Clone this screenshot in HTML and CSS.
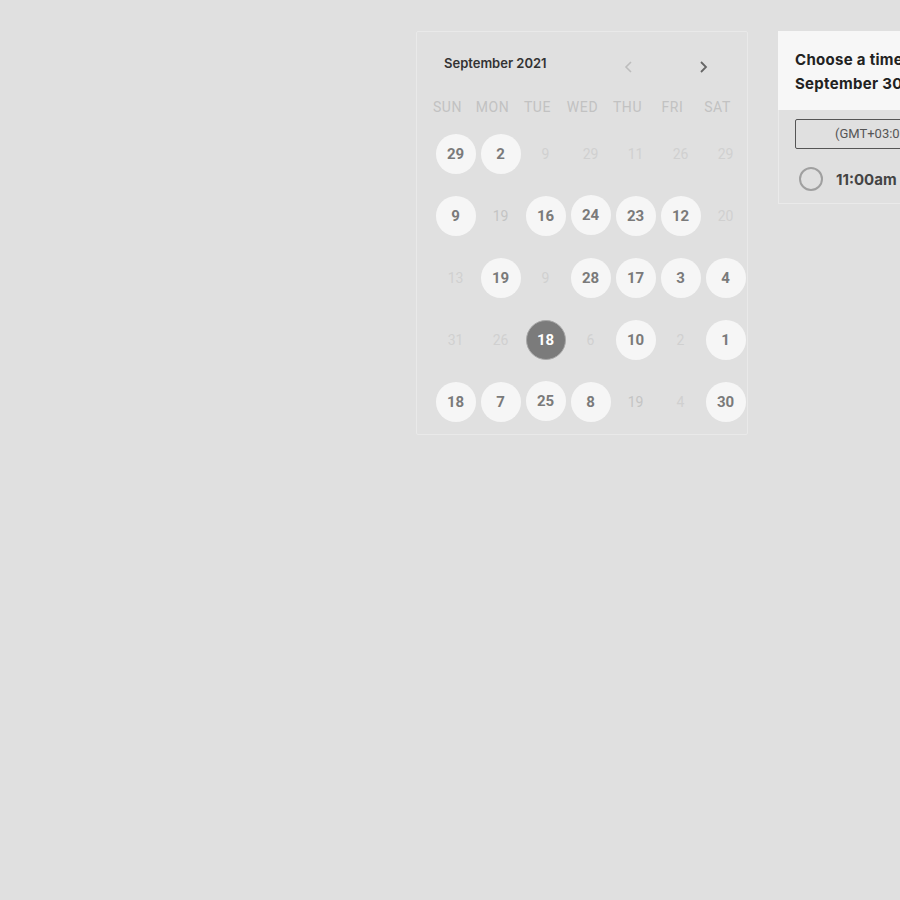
FILE: index.html
```html
<!DOCTYPE html>
<html>
<head>
<meta charset="utf-8">
<link rel="stylesheet" href="styles.css">
</head>
<body>
<div class="page">
  <div class="calendar">
    <div class="cal-head">
      <div class="cal-title">September 2021</div>
      <div class="nav">
        <svg class="arrow prev" width="12" height="14" viewBox="0 0 12 14"><path d="M8 2 L3 7 L8 12" fill="none" stroke="#bdbdbd" stroke-width="1.6"/></svg>
        <svg class="arrow next" width="12" height="14" viewBox="0 0 12 14"><path d="M4 2 L9 7 L4 12" fill="none" stroke="#666" stroke-width="1.8"/></svg>
      </div>
    </div>
    <div class="weekdays">
      <span>SUN</span><span>MON</span><span>TUE</span><span>WED</span><span>THU</span><span>FRI</span><span>SAT</span>
    </div>
    <div class="days">
      <span class="day on">29</span><span class="day on">2</span><span class="day">9</span><span class="day">29</span><span class="day">11</span><span class="day">26</span><span class="day">29</span>
      <span class="day on">9</span><span class="day mid">19</span><span class="day on">16</span><span class="day on up">24</span><span class="day on">23</span><span class="day on">12</span><span class="day">20</span>
      <span class="day">13</span><span class="day on">19</span><span class="day">9</span><span class="day on">28</span><span class="day on">17</span><span class="day on">3</span><span class="day on">4</span>
      <span class="day">31</span><span class="day">26</span><span class="day sel">18</span><span class="day">6</span><span class="day on">10</span><span class="day">2</span><span class="day on">1</span>
      <span class="day on">18</span><span class="day on">7</span><span class="day on up">25</span><span class="day on">8</span><span class="day mid">19</span><span class="day">4</span><span class="day on">30</span>
    </div>
  </div>
  <div class="times">
    <div class="times-head">Choose a time on<br>September 30</div>
    <div class="times-body">
      <div class="tz">(GMT+03:00) Istanbul</div>
      <div class="slot"><span class="radio"></span><span class="slot-time">11:00am</span></div>
    </div>
  </div>
</div>
</body>
</html>
```
FILE: styles.css
```css
html, body {
  margin: 0;
  padding: 0;
  background: #e0e0e0;
  overflow: hidden;
}
.page {
  display: flex;
  align-items: flex-start;
  gap: 30px;
  padding: 31px 0 0 416px;
  width: 900px;
}
.calendar {
  flex: none;
  width: 330px;
  height: 402px;
  border: 1px solid #e9e9e9;
  border-radius: 2px;
  background: #e0e0e0;
}
.cal-head {
  display: flex;
  align-items: center;
  padding: 20px 0 0 27px;
  height: 22px;
}
.cal-title {
  font-family: Inter, "Liberation Sans", sans-serif;
  font-weight: 600;
  font-size: 13px;
  color: #333;
  width: 179px;
}
.nav {
  display: flex;
  gap: 62px;
  margin-top: 8px;
}
.arrow { display: block; }
.weekdays {
  display: grid;
  grid-template-columns: repeat(7, 45px);
  padding-left: 8px;
  margin-top: 23px;
  height: 20px;
  line-height: 20px;
  font-family: Roboto, "Liberation Sans", sans-serif;
  font-size: 14px;
  letter-spacing: 0.6px;
  color: #c2c2c2;
  text-align: center;
}
.days {
  display: grid;
  grid-template-columns: repeat(7, 45px);
  grid-auto-rows: 62px;
  padding-left: 16px;
  margin-top: 6px;
}
.day {
  justify-self: center;
  align-self: center;
  width: 40px;
  height: 40px;
  border-radius: 50%;
  display: flex;
  align-items: center;
  justify-content: center;
  font-family: Roboto, "Liberation Sans", sans-serif;
  font-size: 14px;
  color: #d0d0d0;
}
.day.mid { color: #c4c4c4; }
.day.on {
  background: #f6f6f6;
  color: #7a7a7a;
  font-weight: 700;
  font-size: 15px;
}
.day.up { margin-top: -3px; }
.day.sel {
  background: #7b7b7b;
  border: 1px solid #a8a8a8;
  box-sizing: border-box;
  color: #fff;
  font-weight: 700;
  font-size: 15px;
}
.times {
  flex: none;
  width: 320px;
}
.times-head {
  background: #f7f7f7;
  padding: 17px 17px 0;
  height: 62px;
  font-family: Inter, "Liberation Sans", sans-serif;
  font-weight: 700;
  font-size: 15px;
  letter-spacing: 0.3px;
  line-height: 24px;
  color: #222;
}
.times-body {
  border-left: 1px solid #eaeaea;
  border-bottom: 1px solid #eaeaea;
  padding: 9px 0 12px 16px;
}
.tz {
  border: 1px solid #555;
  border-radius: 2px;
  height: 28px;
  line-height: 28px;
  padding-left: 39px;
  font-family: Roboto, "Liberation Sans", sans-serif;
  font-size: 13px;
  color: #555;
}
.slot {
  display: flex;
  align-items: center;
  margin-top: 18px;
  padding-left: 4px;
}
.radio {
  width: 20px;
  height: 20px;
  border: 2px solid #a0a0a0;
  border-radius: 50%;
}
.slot-time {
  margin-left: 13px;
  font-family: Inter, "Liberation Sans", sans-serif;
  font-weight: 700;
  font-size: 15px;
  color: #444;
}
```
